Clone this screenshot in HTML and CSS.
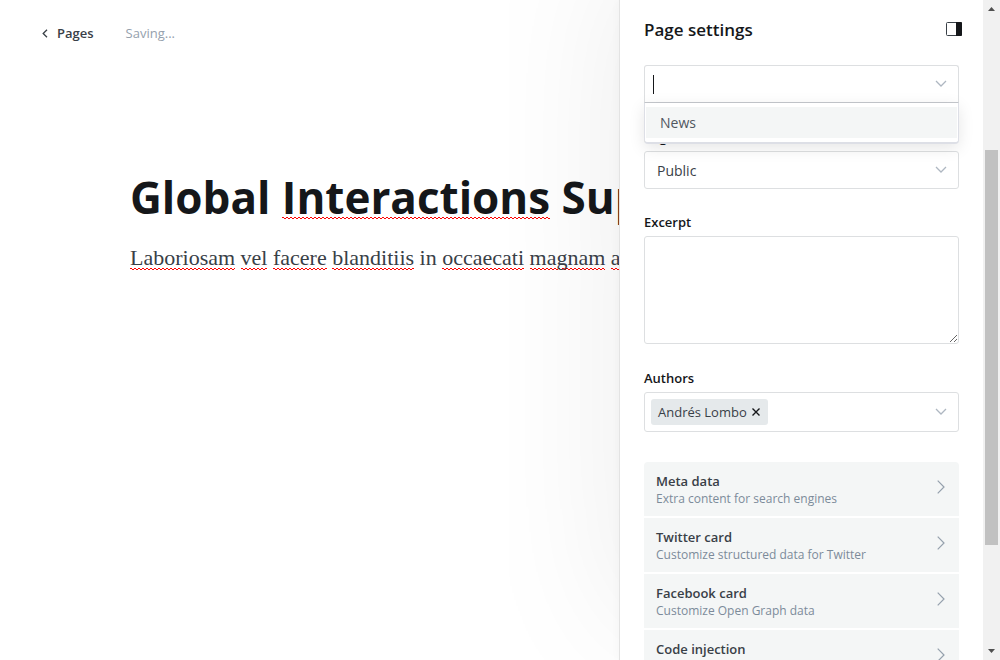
FILE: index.html
```html
<!DOCTYPE html>
<html lang="en">
<head>
<meta charset="utf-8">
<title>Page settings</title>
<link rel="stylesheet" href="styles.css">
</head>
<body>
<div class="app">
  <main class="editor">
    <header class="editor-header">
      <a class="back" href="#"><svg class="back-icon" viewBox="0 0 6 9" aria-hidden="true"><path d="M5 .8 1.2 4.5 5 8.2"/></svg>Pages</a>
      <span class="status">Saving...</span>
    </header>
    <article class="post">
      <h1 class="post-title">Global <span class="misspelt">Interactions</span> Sup</h1>
      <p class="post-body"><span class="misspelt">Laboriosam</span> <span class="misspelt">vel</span> <span class="misspelt">facere</span> <span class="misspelt">blanditiis</span> in <span class="misspelt">occaecati</span> <span class="misspelt">magnam</span> <span class="misspelt">a</span></p>
    </article>
  </main>
  <aside class="settings">
    <div class="settings-main">
      <header class="settings-header">
        <h2 class="settings-title">Page settings</h2>
        <button class="toggle" type="button" aria-label="Close settings"><svg viewBox="0 0 16 14" aria-hidden="true"><rect x=".5" y=".5" width="15" height="13" rx="1" fill="#fff" stroke="#394047"/><path d="M10 0h5a1 1 0 0 1 1 1v12a1 1 0 0 1-1 1h-5z" fill="#15171a"/></svg></button>
      </header>
      <form class="fields">
        <div class="field tags">
          <div class="control tags-control">
            <span class="caret"></span>
            <input class="bare-input" type="text" aria-label="Tags">
            <svg class="chevron" viewBox="0 0 12 8" aria-hidden="true"><path d="m1 1 5 5 5-5"/></svg>
          </div>
          <ul class="options" role="listbox"><li class="option" role="option">News</li></ul>
        </div>
        <div class="field access">
          <label class="label" for="access">Page access</label>
          <div class="select-wrap">
            <select class="control select" id="access"><option>Public</option></select>
            <svg class="chevron" viewBox="0 0 12 8" aria-hidden="true"><path d="m1 1 5 5 5-5"/></svg>
          </div>
        </div>
        <div class="field">
          <label class="label" for="excerpt">Excerpt</label>
          <textarea class="control excerpt" id="excerpt"></textarea>
        </div>
        <div class="field">
          <label class="label" for="authors">Authors</label>
          <div class="control authors-control">
            <span class="token">Andrés Lombo<button class="token-remove" type="button" aria-label="Remove Andrés Lombo"><svg viewBox="0 0 8 8" aria-hidden="true"><path d="m.5.5 7 7m0-7-7 7"/></svg></button></span>
            <input class="bare-input" id="authors" type="text">
            <svg class="chevron" viewBox="0 0 12 8" aria-hidden="true"><path d="m1 1 5 5 5-5"/></svg>
          </div>
        </div>
        <nav class="links">
          <button class="link" type="button"><span class="link-text"><b class="link-name">Meta data</b><span class="link-note">Extra content for search engines</span></span><svg class="arrow" viewBox="0 0 8 14" aria-hidden="true"><path d="m.7.7 6.3 6.3-6.3 6.3"/></svg></button>
          <button class="link" type="button"><span class="link-text"><b class="link-name">Twitter card</b><span class="link-note">Customize structured data for Twitter</span></span><svg class="arrow" viewBox="0 0 8 14" aria-hidden="true"><path d="m.7.7 6.3 6.3-6.3 6.3"/></svg></button>
          <button class="link" type="button"><span class="link-text"><b class="link-name">Facebook card</b><span class="link-note">Customize Open Graph data</span></span><svg class="arrow" viewBox="0 0 8 14" aria-hidden="true"><path d="m.7.7 6.3 6.3-6.3 6.3"/></svg></button>
          <button class="link" type="button"><span class="link-text"><b class="link-name">Code injection</b></span><svg class="arrow" viewBox="0 0 8 14" aria-hidden="true"><path d="m.7.7 6.3 6.3-6.3 6.3"/></svg></button>
        </nav>
      </form>
    </div>
    <div class="scrollbar" aria-hidden="true">
      <svg class="scroll-arrow" viewBox="0 0 7 4"><path d="M0 4 3.5 0 7 4z"/></svg>
      <div class="scroll-track"><div class="scroll-thumb"></div></div>
      <svg class="scroll-arrow" viewBox="0 0 7 4"><path d="M0 0 3.5 4 7 0z"/></svg>
    </div>
  </aside>
</div>
</body>
</html>
```
FILE: styles.css
```css
*, *::before, *::after { box-sizing: border-box; }

body {
  margin: 0;
  background: #fff;
  color: #15171a;
  font: 13px/20px "Open Sans", "Noto Sans", sans-serif;
}

button, input, select, textarea { font: inherit; color: inherit; }
button { border: 0; background: none; padding: 0; cursor: pointer; }
h1, h2, p, ul { margin: 0; padding: 0; }
svg { display: block; flex: none; fill: none; }

.app { display: flex; height: 100vh; overflow: hidden; }

/* Editor */
.editor { flex: 1; min-width: 0; }
.editor-header { display: flex; gap: 32px; padding: 23px 42px; }
.back { display: flex; align-items: center; gap: 9px; color: #394047; font-weight: 600; text-decoration: none; }
.back-icon { width: 6px; height: 9px; stroke: #394047; stroke-width: 1.3; }
.status { color: #95a1ad; }
.post { padding: 98px 0 0 130px; white-space: nowrap; }
.post-title { font-size: 44px; line-height: 66px; font-weight: 700; }
.post-body { margin-top: 12px; color: #394047; font: 22px/32px "Liberation Serif", serif; }
.misspelt {
  background: url("data:image/svg+xml,%3Csvg xmlns='http://www.w3.org/2000/svg' width='4' height='2' shape-rendering='crispEdges' fill='red'%3E%3Cpath d='M0 0h2v1H0zM2 1h2v1H2z'/%3E%3C/svg%3E") repeat-x left bottom / 4px 2px;
}
.post-title .misspelt { background-position: left bottom 8px; }

/* Settings panel */
.settings {
  position: relative;
  display: flex;
  width: 381px;
  background: #fff;
  border-left: 1px solid #e3e3e3;
  box-shadow: 0 0 10px rgba(0, 0, 0, .03), 0 -40px 150px rgba(0, 0, 0, .08);
}
.settings-main { flex: 1; min-width: 0; overflow: hidden; }
.settings-header { display: flex; align-items: center; justify-content: space-between; height: 60px; padding: 0 21px 0 24px; }
.settings-title { font-size: 17px; line-height: 24px; font-weight: 600; }
.toggle svg { width: 16px; height: 14px; }
.toggle { padding-bottom: 2px; }
.fields { padding: 5px 24px 0; }
.field { position: relative; margin-bottom: 24px; }
.label { display: block; margin-bottom: 4px; font-weight: 600; }
.control { display: block; width: 100%; border: 1px solid #dddfe1; border-radius: 3px; background: #fff; }
.chevron { width: 12px; height: 8px; stroke: #aeb7c1; stroke-width: 1.3; }
.bare-input { flex: 1; min-width: 0; border: 0; outline: 0; padding: 0; background: none; }

.tags-control { display: flex; align-items: center; height: 38px; padding: 0 11px 0 8px; border-radius: 3px 3px 0 0; border-bottom-color: #c5c8cd; }
.caret { width: 1px; height: 19px; background: #15171a; }
.options {
  position: absolute;
  top: 100%;
  left: 0;
  right: 0;
  z-index: 1;
  padding: 4px 0;
  border: 1px solid #dddfe6;
  border-top: 0;
  border-bottom-width: 2px;
  border-radius: 0 0 4px 4px;
  background: #fff;
  box-shadow: 0 4px 16px rgba(0, 0, 0, .1);
  list-style: none;
}
.option { margin: 0 1px; padding: 6px 14px 5px; background: #f4f6f6; color: #50575f; font-size: 14px; }

.access { margin-bottom: 23px; }
.select-wrap { display: grid; align-items: center; }
.select-wrap > * { grid-area: 1 / 1; }
.select-wrap .chevron { justify-self: end; margin-right: 12px; pointer-events: none; }
.select { height: 38px; padding: 1px 12px 0; appearance: none; color: #394047; font-size: 14px; }
.excerpt { height: 108px; resize: vertical; }
.authors-control { display: flex; align-items: center; height: 40px; padding: 0 11px 0 6px; }
.token { display: flex; align-items: center; gap: 5px; height: 26px; padding: 0 8px 1px 7px; border-radius: 3px; background: #e5e9eb; color: #394047; font-weight: 500; }
.token-remove svg { width: 8px; height: 8px; stroke: #15171a; stroke-width: 1.4; }

.links { display: grid; gap: 2px; margin-top: 30px; border-radius: 4px; overflow: hidden; }
.link { display: flex; justify-content: space-between; padding: 10px 14px 9px 12px; background: #f4f6f6; text-align: left; }
.link-text { display: grid; }
.link-name { color: #394047; font-weight: 600; line-height: 18px; }
.link-note { color: #7c8b9a; font-size: 12px; line-height: 17px; }
.arrow { width: 8px; height: 14px; margin-top: 8px; stroke: #95a1ad; stroke-width: 1.2; }

/* Scrollbar */
.scrollbar { display: flex; flex-direction: column; align-items: center; justify-content: space-between; width: 17px; padding: 7px 0; background: #f1f1f1; }
.scroll-arrow { width: 7px; height: 4px; fill: #505050; }
.scroll-track { flex: 1; width: 13px; padding: 139px 0 104px; }
.scroll-thumb { height: 100%; background: #c1c1c1; }
```
